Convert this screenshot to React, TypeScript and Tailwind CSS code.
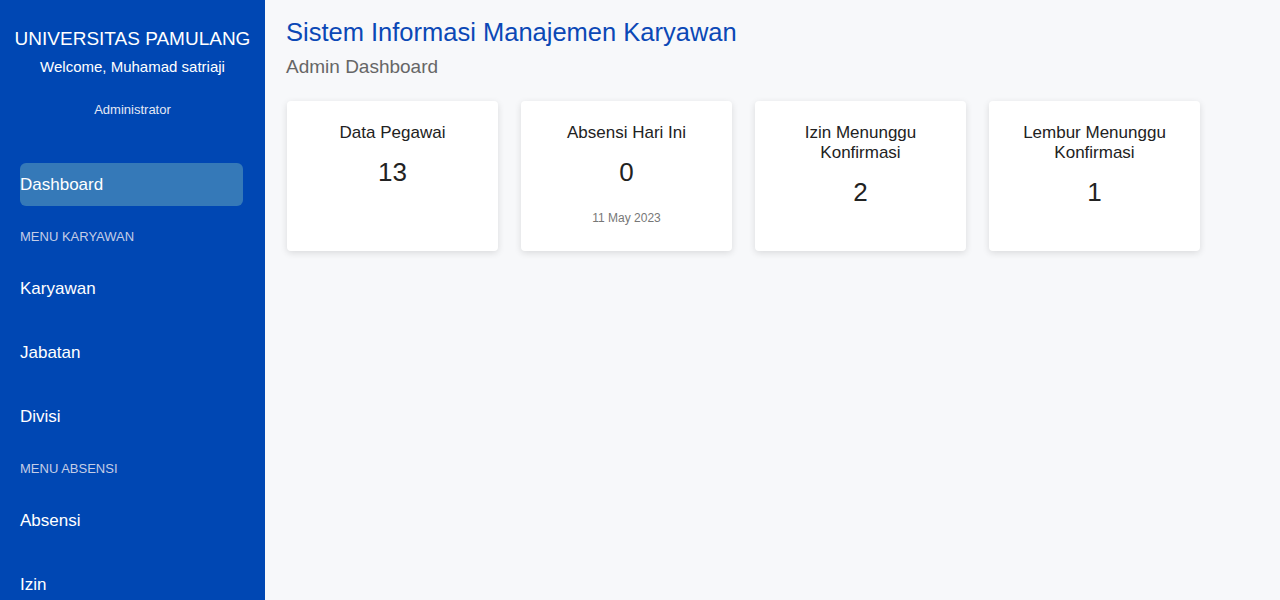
import React from "react";

const font = { fontFamily: '"Liberation Sans", Arial, sans-serif' };

function Card({ title, value, sub }: { title: React.ReactNode; value: string; sub?: string }) {
  return (
    <div className="w-[211px] h-[150px] bg-white rounded-[4px] shadow-[0_2px_7px_rgba(0,0,0,0.12)] flex flex-col items-center pt-[22px] px-4 text-center">
      <div className="text-[17px] leading-[20px] text-[#222]">{title}</div>
      <div className="text-[26px] leading-[30px] text-[#222] mt-[14px]">{value}</div>
      {sub && <div className="text-[12px] leading-[14px] text-[#777] mt-[24px]">{sub}</div>}
    </div>
  );
}

export default function App() {
  return (
    <div className="flex w-[1280px] h-[600px] overflow-hidden bg-[#f7f8fa]" style={font}>
      <aside className="w-[265px] shrink-0 bg-[#0047b3] text-white flex flex-col">
        <div className="text-center pt-[28px]">
          <div className="text-[19px] leading-[22px]">UNIVERSITAS PAMULANG</div>
          <div className="text-[15px] leading-[17px] mt-[8px]">Welcome, Muhamad satriaji</div>
          <div className="text-[13px] leading-[15px] mt-[27px] text-[#e4e9f5]">Administrator</div>
        </div>
        <nav className="pl-5 pr-[22px] mt-[46px] flex flex-col">
          <div className="h-[43px] rounded-[6px] bg-[#3579b8] flex items-center text-[17px]">Dashboard</div>
          <div className="text-[13px] leading-[15px] text-[#c4cde6] mt-[23px]">MENU KARYAWAN</div>
          <div className="text-[17px] leading-[20px] mt-[35px]">Karyawan</div>
          <div className="text-[17px] leading-[20px] mt-[44px]">Jabatan</div>
          <div className="text-[17px] leading-[20px] mt-[44px]">Divisi</div>
          <div className="text-[13px] leading-[15px] text-[#c4cde6] mt-[34px]">MENU ABSENSI</div>
          <div className="text-[17px] leading-[20px] mt-[35px]">Absensi</div>
          <div className="text-[17px] leading-[20px] mt-[44px]">Izin</div>
        </nav>
      </aside>
      <main className="flex-1 pl-[21px] pt-[17px]">
        <h1 className="text-[25.5px] leading-[30px] text-[#0b48b6]">Sistem Informasi Manajemen Karyawan</h1>
        <h2 className="text-[19px] leading-[24px] text-[#666] mt-[8px]">Admin Dashboard</h2>
        <div className="flex gap-[23px] mt-[22px] ml-px">
          <Card title="Data Pegawai" value="13" />
          <Card title="Absensi Hari Ini" value="0" sub="11 May 2023" />
          <Card title={<>Izin Menunggu<br />Konfirmasi</>} value="2" />
          <Card title={<>Lembur Menunggu<br />Konfirmasi</>} value="1" />
        </div>
      </main>
    </div>
  );
}
